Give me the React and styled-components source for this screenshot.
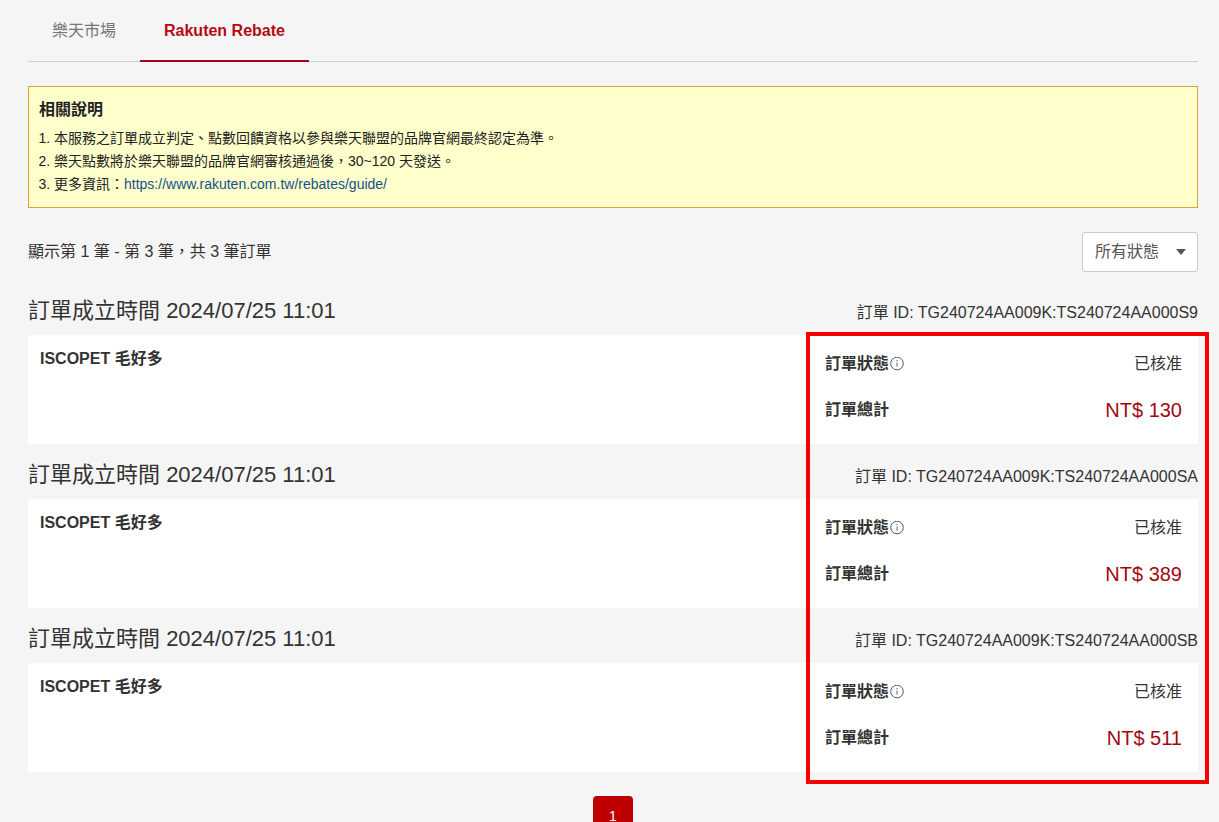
import React, { useState } from "react";
import styled, { createGlobalStyle } from "styled-components";

const orders = [
  { id: "TG240724AA009K:TS240724AA000S9", time: "2024/07/25 11:01", total: 130 },
  { id: "TG240724AA009K:TS240724AA000SA", time: "2024/07/25 11:01", total: 389 },
  { id: "TG240724AA009K:TS240724AA000SB", time: "2024/07/25 11:01", total: 511 },
];

const InfoIcon = () => (
  <svg width="14" height="14" viewBox="0 0 14 14" fill="none" aria-hidden="true">
    <circle cx="7" cy="6.5" r="6.3" stroke="#444" strokeWidth="0.9" />
    <path d="M7 5.5v4.2" stroke="#555" strokeWidth="0.9" />
    <circle cx="7" cy="3.6" r="0.7" fill="#555" />
  </svg>
);

const Order = ({ order }) => (
  <article>
    <SOrderHeader>
      <SOrderTime>訂單成立時間 {order.time}</SOrderTime>
      <span>訂單 ID: {order.id}</span>
    </SOrderHeader>
    <SCard>
      <SShop>ISCOPET 毛好多</SShop>
      <SDetail>
        <SDetailRow>
          <SLabel>
            訂單狀態
            <InfoIcon />
          </SLabel>
          <dd>已核准</dd>
        </SDetailRow>
        <SDetailRow>
          <SLabel>訂單總計</SLabel>
          <SPrice>NT$ {order.total}</SPrice>
        </SDetailRow>
      </SDetail>
    </SCard>
  </article>
);

export default function App() {
  const [tab, setTab] = useState("rebate");
  const [status, setStatus] = useState("all");

  return (
    <>
      <GlobalStyle />
      <SPage>
        <STabs>
          <STab $active={tab === "market"} onClick={() => setTab("market")}>
            樂天市場
          </STab>
          <STab $active={tab === "rebate"} onClick={() => setTab("rebate")}>
            Rakuten Rebate
          </STab>
        </STabs>
        <SNotice>
          <SNoticeTitle>相關說明</SNoticeTitle>
          <SNoticeList>
            <li>本服務之訂單成立判定、點數回饋資格以參與樂天聯盟的品牌官網最終認定為準。</li>
            <li>樂天點數將於樂天聯盟的品牌官網審核通過後，30~120 天發送。</li>
            <li>
              更多資訊：
              <SLink href="https://www.rakuten.com.tw/rebates/guide/">
                https://www.rakuten.com.tw/rebates/guide/
              </SLink>
            </li>
          </SNoticeList>
        </SNotice>
        <SSummary>
          <span>顯示第 1 筆 - 第 3 筆，共 3 筆訂單</span>
          <SSelectWrap>
            <SSelect
              aria-label="訂單狀態"
              value={status}
              onChange={(e) => setStatus(e.target.value)}
            >
              <option value="all">所有狀態</option>
              <option value="approved">已核准</option>
            </SSelect>
            <SCaret />
          </SSelectWrap>
        </SSummary>
        <SOrders>
          {orders.map((order) => (
            <Order key={order.id} order={order} />
          ))}
          <SHighlight />
        </SOrders>
        <SPagination>
          <SPageButton>1</SPageButton>
        </SPagination>
      </SPage>
    </>
  );
}

const GlobalStyle = createGlobalStyle`
  * {
    box-sizing: border-box;
  }
  html {
    scrollbar-width: none;
  }
  body {
    margin: 0;
    background-color: #f5f5f5;
    color: #333;
    font-family: "Liberation Sans", "Noto Sans CJK TC", sans-serif;
    font-size: 16px;
    line-height: 24px;
  }
  button,
  select {
    font: inherit;
  }
  dl,
  dd {
    margin: 0;
  }
`;

const SPage = styled.main`
  padding: 0 21px 0 28px;
`;

const STabs = styled.nav`
  display: flex;
  height: 62px;
  border-bottom: 1px solid #ccc;
`;

const STab = styled.button`
  height: 62px;
  padding: 2px 24px 0;
  border: none;
  border-bottom: 2px solid ${(props) => (props.$active ? "#a3080f" : "transparent")};
  background: none;
  color: ${(props) => (props.$active ? "#b50a14" : "#757575")};
  font-weight: ${(props) => (props.$active ? "700" : "400")};
  cursor: pointer;
`;

const SNotice = styled.section`
  margin-top: 24px;
  padding: 11px 10px;
  border: 1px solid #d9a436;
  background-color: #ffffcc;
  color: #222;
`;

const SNoticeTitle = styled.h2`
  margin: 0 0 5px;
  font-size: 16px;
  line-height: 24px;
`;

const SNoticeList = styled.ol`
  margin: 0;
  padding-left: 15px;
  font-size: 14px;
  line-height: 23px;
`;

const SLink = styled.a`
  color: #14508c;
  text-decoration: none;
`;

const SSummary = styled.div`
  display: flex;
  align-items: center;
  justify-content: space-between;
  margin: 24px 0 8px;
`;

const SSelectWrap = styled.div`
  position: relative;
`;

const SSelect = styled.select`
  display: block;
  width: 116px;
  height: 40px;
  padding: 0 12px;
  border: 1px solid #ccc;
  border-radius: 3px;
  background-color: #fff;
  color: #555;
  appearance: none;
`;

const SCaret = styled.span`
  position: absolute;
  top: 17px;
  right: 12px;
  border: 5px solid transparent;
  border-top: 6px solid #555;
  border-bottom: none;
  pointer-events: none;
`;

const SOrders = styled.section`
  position: relative;
`;

const SOrderHeader = styled.header`
  display: flex;
  align-items: baseline;
  justify-content: space-between;
  height: 55px;
  padding-top: 15px;
`;

const SOrderTime = styled.h3`
  margin: 0;
  font-size: 22px;
  font-weight: 400;
  line-height: 32px;
`;

const SCard = styled.div`
  display: flex;
  justify-content: space-between;
  min-height: 109px;
  background-color: #fff;
`;

const SShop = styled.strong`
  padding: 12px;
`;

const SDetail = styled.dl`
  display: flex;
  flex-direction: column;
  gap: 22px;
  width: 373px;
  padding: 17px 16px 22px 0;
`;

const SDetailRow = styled.div`
  display: flex;
  align-items: center;
  justify-content: space-between;
`;

const SLabel = styled.dt`
  display: flex;
  align-items: center;
  gap: 1px;
  font-weight: 700;
`;

const SPrice = styled.dd`
  color: #a3080f;
  font-size: 20px;
`;

/* red frame over the order details */
const SHighlight = styled.div`
  position: absolute;
  top: 52px;
  right: -11px;
  bottom: -12px;
  width: 403px;
  border: 4px solid #f80000;
  pointer-events: none;
`;

const SPagination = styled.nav`
  display: flex;
  justify-content: center;
  margin-top: 24px;
`;

const SPageButton = styled.button`
  width: 40px;
  height: 40px;
  border: none;
  border-radius: 4px;
  background-color: #bf0000;
  color: #fff;
  font-size: 14px;
  cursor: pointer;
`;
